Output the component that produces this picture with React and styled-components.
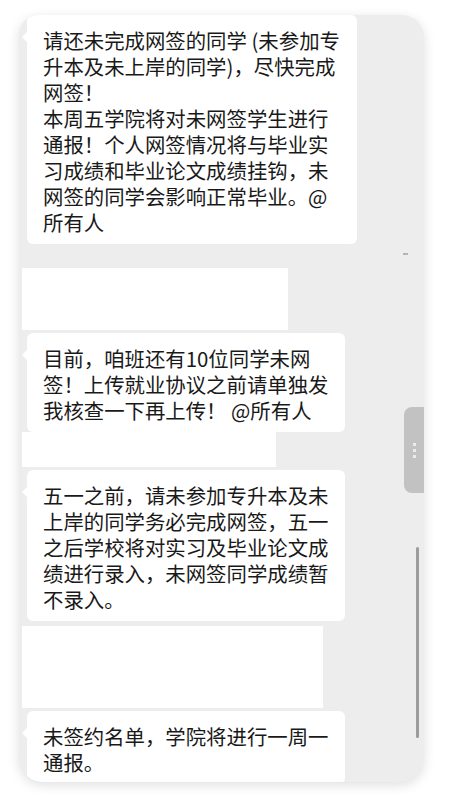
import styled, { createGlobalStyle } from "styled-components";

const GlobalStyle = createGlobalStyle`
  html, body {
    margin: 0;
    padding: 0;
    background: #ffffff;
  }
  body {
    font-family: "Noto Sans CJK SC", "Noto Sans", sans-serif;
  }
`;

const Page = styled.div`
  width: 454px;
  height: 800px;
  padding: 15px 0 0 19px;
  box-sizing: border-box;
  overflow: hidden;
`;

const Card = styled.div`
  position: relative;
  width: 405px;
  height: 767px;
  background: #ededed;
  border-radius: 20px 22px 24px 24px;
  overflow: hidden;
  box-shadow: 0 3px 12px rgba(0, 0, 0, 0.13);
  display: flex;
  flex-direction: column;
  align-items: flex-start;
`;

const Bubble = styled.div`
  position: relative;
  margin-left: 8px;
  margin-top: ${(props) => props.gap || 0}px;
  padding: 12px 17px 9px 16px;
  background: #ffffff;
  border-radius: 6px;
  color: #191919;
  font-size: 20.4px;
  line-height: 26px;
  flex-shrink: 0;

  &::before {
    content: "";
    position: absolute;
    left: -5px;
    top: 17px;
    border: 5px solid transparent;
    border-left: 0;
    border-right-color: #ffffff;
  }
`;

const Line = styled.div`
  white-space: nowrap;
`;

const Placeholder = styled.div`
  margin-left: 3px;
  margin-top: ${(props) => props.gap || 0}px;
  width: ${(props) => props.w}px;
  height: ${(props) => props.h}px;
  background: #ffffff;
  flex-shrink: 0;
`;

const ScrollThumb = styled.div`
  position: absolute;
  left: 397px;
  top: 532px;
  width: 3px;
  height: 191px;
  border-radius: 2px;
  background: #9c9c9c;
`;

const Dash = styled.div`
  position: absolute;
  left: 384px;
  top: 238px;
  width: 5px;
  height: 2px;
  background: #b4b4b4;
`;

const SideTab = styled.div`
  position: absolute;
  right: 0;
  top: 392px;
  width: 20px;
  height: 86px;
  border-radius: 8px 0 0 8px;
  background: #c2c2c2;
  display: flex;
  flex-direction: column;
  align-items: center;
  justify-content: center;
  gap: 3px;
`;

const Dot = styled.span`
  display: block;
  width: 3px;
  height: 3px;
  background: #ebebeb;
`;

const items = [
  {
    type: "msg",
    gap: 0,
    lines: [
      "请还未完成网签的同学 (未参加专",
      "升本及未上岸的同学)，尽快完成",
      "网签！",
      "本周五学院将对未网签学生进行",
      "通报！个人网签情况将与毕业实",
      "习成绩和毕业论文成绩挂钩，未",
      "网签的同学会影响正常毕业。@",
      "所有人",
    ],
  },
  { type: "block", gap: 24, w: 266, h: 62 },
  {
    type: "msg",
    gap: 3,
    lines: [
      "目前，咱班还有10位同学未网",
      "签！上传就业协议之前请单独发",
      "我核查一下再上传！ @所有人",
    ],
  },
  { type: "block", gap: 0, w: 254, h: 35 },
  {
    type: "msg",
    gap: 3,
    lines: [
      "五一之前，请未参加专升本及未",
      "上岸的同学务必完成网签，五一",
      "之后学校将对实习及毕业论文成",
      "绩进行录入，未网签同学成绩暂",
      "不录入。",
    ],
  },
  { type: "block", gap: 5, w: 301, h: 82 },
  {
    type: "msg",
    gap: 3,
    lines: ["未签约名单，学院将进行一周一", "通报。"],
  },
];

export default function App() {
  return (
    <>
      <GlobalStyle />
      <Page>
        <Card>
          {items.map((item, i) =>
            item.type === "msg" ? (
              <Bubble key={i} gap={item.gap}>
                {item.lines.map((l, j) => (
                  <Line key={j}>{l}</Line>
                ))}
              </Bubble>
            ) : (
              <Placeholder key={i} gap={item.gap} w={item.w} h={item.h} />
            )
          )}
          <Dash />
          <SideTab>
            <Dot />
            <Dot />
            <Dot />
          </SideTab>
          <ScrollThumb />
        </Card>
      </Page>
    </>
  );
}
